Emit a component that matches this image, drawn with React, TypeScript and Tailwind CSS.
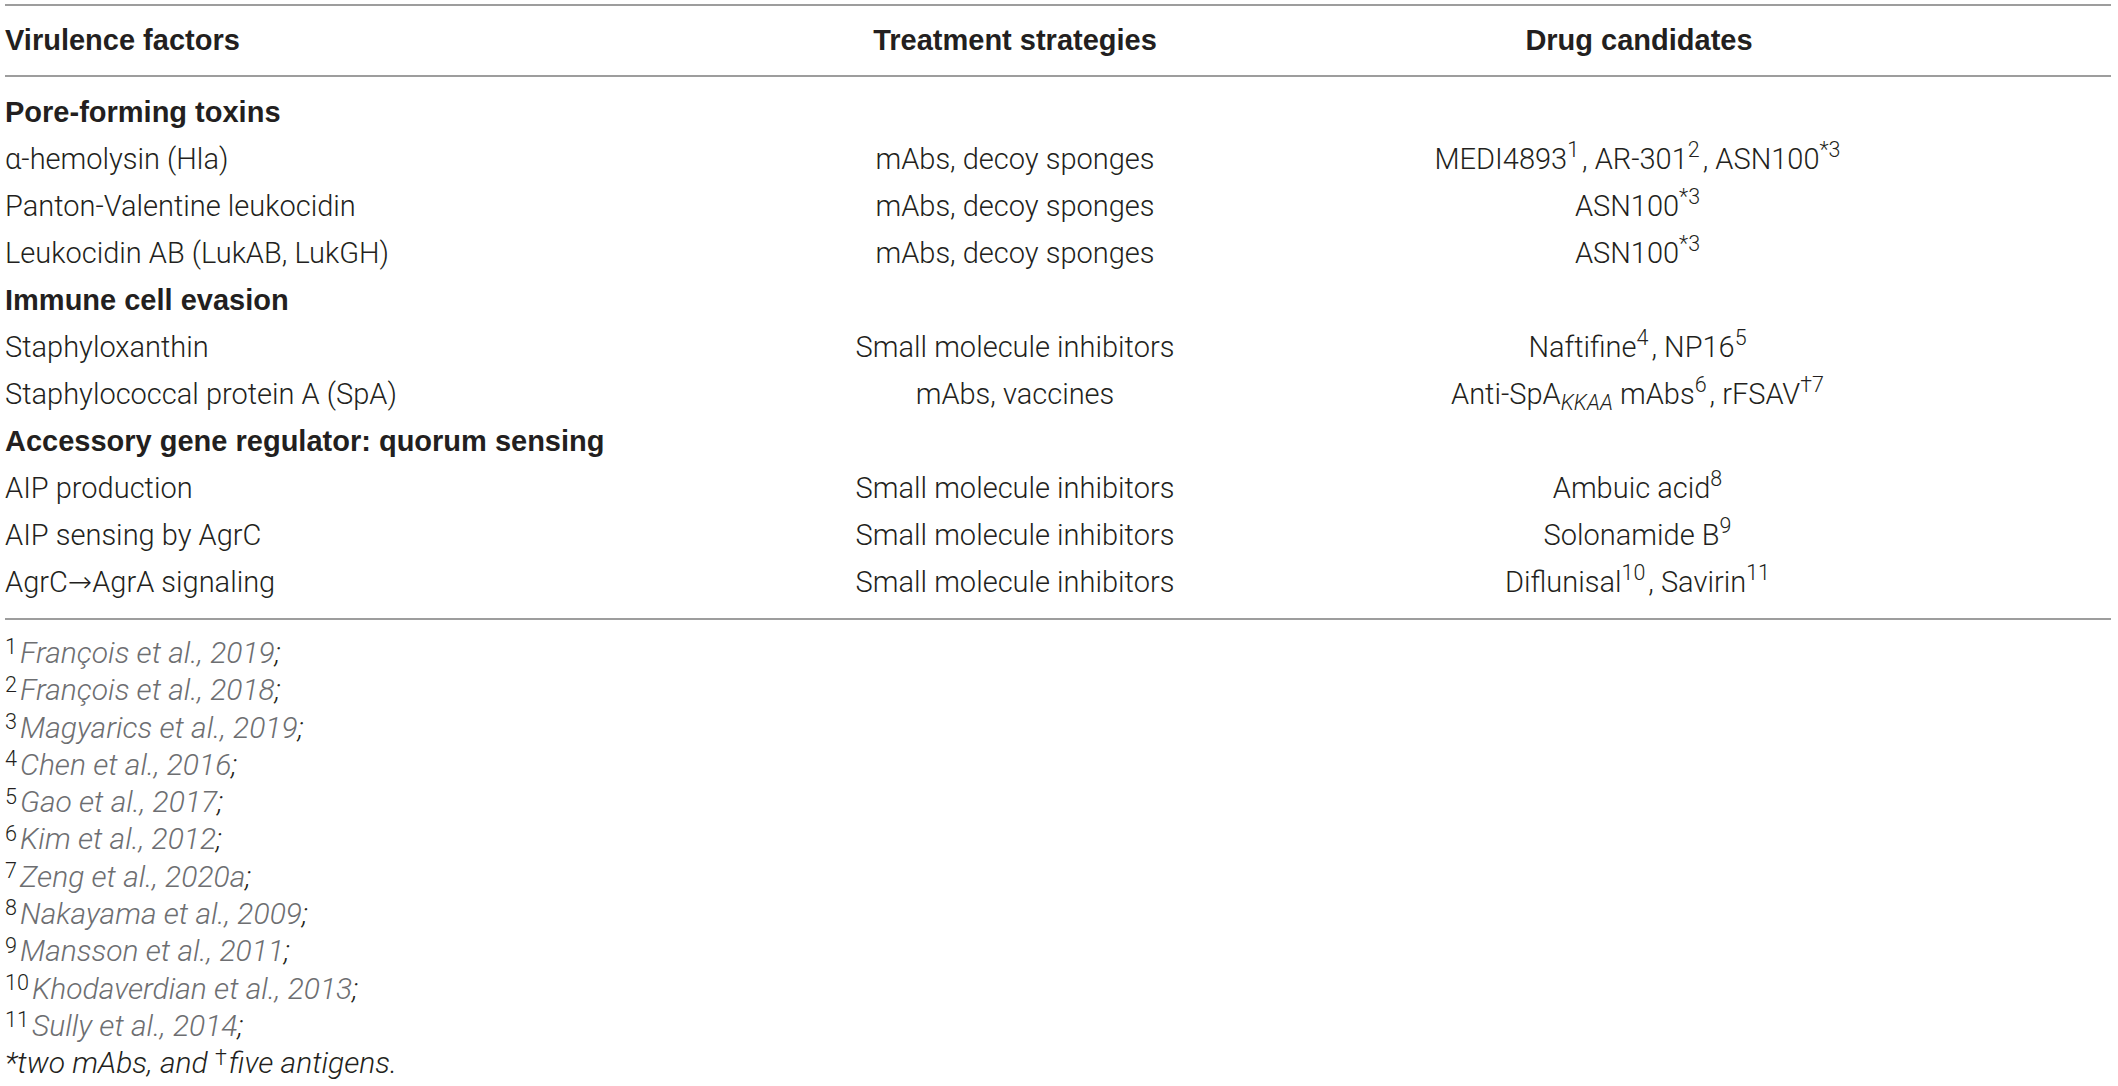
const body = "font-['Roboto','Liberation_Sans',sans-serif] font-light";
const bold = "font-['Liberation_Sans','Roboto',sans-serif] font-bold";

type Row =
  | { kind: "group"; title: string }
  | { kind: "row"; factor: React.ReactNode; strategy: string; drugs: React.ReactNode };

function Sup({ children }: { children: React.ReactNode }) {
  return <sup className="text-[0.74em] -top-[0.55em] mr-[3px]">{children}</sup>;
}

const rows: Row[] = [
  { kind: "group", title: "Pore-forming toxins" },
  {
    kind: "row",
    factor: "α-hemolysin (Hla)",
    strategy: "mAbs, decoy sponges",
    drugs: (
      <>
        MEDI4893<Sup>1</Sup>, AR-301<Sup>2</Sup>, ASN100<Sup>*3</Sup>
      </>
    ),
  },
  {
    kind: "row",
    factor: "Panton-Valentine leukocidin",
    strategy: "mAbs, decoy sponges",
    drugs: (
      <>
        ASN100<Sup>*3</Sup>
      </>
    ),
  },
  {
    kind: "row",
    factor: "Leukocidin AB (LukAB, LukGH)",
    strategy: "mAbs, decoy sponges",
    drugs: (
      <>
        ASN100<Sup>*3</Sup>
      </>
    ),
  },
  { kind: "group", title: "Immune cell evasion" },
  {
    kind: "row",
    factor: "Staphyloxanthin",
    strategy: "Small molecule inhibitors",
    drugs: (
      <>
        Naftifine<Sup>4</Sup>, NP16<Sup>5</Sup>
      </>
    ),
  },
  {
    kind: "row",
    factor: "Staphylococcal protein A (SpA)",
    strategy: "mAbs, vaccines",
    drugs: (
      <>
        Anti-SpA<sub className="italic text-[0.74em] top-[0.3em]">KKAA</sub> mAbs
        <Sup>6</Sup>, rFSAV<Sup>†7</Sup>
      </>
    ),
  },
  { kind: "group", title: "Accessory gene regulator: quorum sensing" },
  {
    kind: "row",
    factor: "AIP production",
    strategy: "Small molecule inhibitors",
    drugs: (
      <>
        Ambuic acid<Sup>8</Sup>
      </>
    ),
  },
  {
    kind: "row",
    factor: "AIP sensing by AgrC",
    strategy: "Small molecule inhibitors",
    drugs: (
      <>
        Solonamide B<Sup>9</Sup>
      </>
    ),
  },
  {
    kind: "row",
    factor: (
      <>
        AgrC<span className="font-['DejaVu_Sans',sans-serif] font-extralight">→</span>AgrA signaling
      </>
    ),
    strategy: "Small molecule inhibitors",
    drugs: (
      <>
        Diflunisal<Sup>10</Sup>, Savirin<Sup>11</Sup>
      </>
    ),
  },
];

const refs = [
  "François et al., 2019",
  "François et al., 2018",
  "Magyarics et al., 2019",
  "Chen et al., 2016",
  "Gao et al., 2017",
  "Kim et al., 2012",
  "Zeng et al., 2020a",
  "Nakayama et al., 2009",
  "Mansson et al., 2011",
  "Khodaverdian et al., 2013",
  "Sully et al., 2014",
];

export default function App() {
  return (
    <div className="w-[2118px] h-[1086px] bg-white text-[#231f20] px-[5px] pt-[4px] overflow-hidden">
      {/* Table */}
      <div className="border-t-2 border-b-2 border-[#9d9d9d] w-[2106px]">
        <div className={`grid grid-cols-[750px_520px_728px] h-[71px] items-center border-b-2 border-[#9d9d9d] text-[29px] ${bold}`}>
          <div>Virulence factors</div>
          <div className="text-center">Treatment strategies</div>
          <div className="text-center">Drug candidates</div>
        </div>

        <div className="pt-[12px] pb-[12px]">
          {rows.map((r, i) =>
            r.kind === "group" ? (
              <div key={i} className={`h-[47px] flex items-center text-[29px] ${bold}`}>
                {r.title}
              </div>
            ) : (
              <div
                key={i}
                className={`grid grid-cols-[750px_520px_728px] h-[47px] items-center text-[29px] ${body}`}
              >
                <div>{r.factor}</div>
                <div className="text-center">{r.strategy}</div>
                <div className="text-center">{r.drugs}</div>
              </div>
            )
          )}
        </div>
      </div>

      {/* Footnotes */}
      <div className={`pt-[14px] text-[30px] leading-[37.3px] ${body}`}>
        {refs.map((ref, i) => (
          <div key={ref}>
            <sup className="not-italic text-[0.72em] -top-[0.4em] mr-[3px]">{i + 1}</sup>
            <span className="italic text-[#6d6e71]">{ref}</span>
            <span className="italic">;</span>
          </div>
        ))}
        <div className="italic">
          *two mAbs, and <sup className="not-italic text-[0.72em] -top-[0.4em] mr-[2px]">†</sup>five antigens.
        </div>
      </div>
    </div>
  );
}
